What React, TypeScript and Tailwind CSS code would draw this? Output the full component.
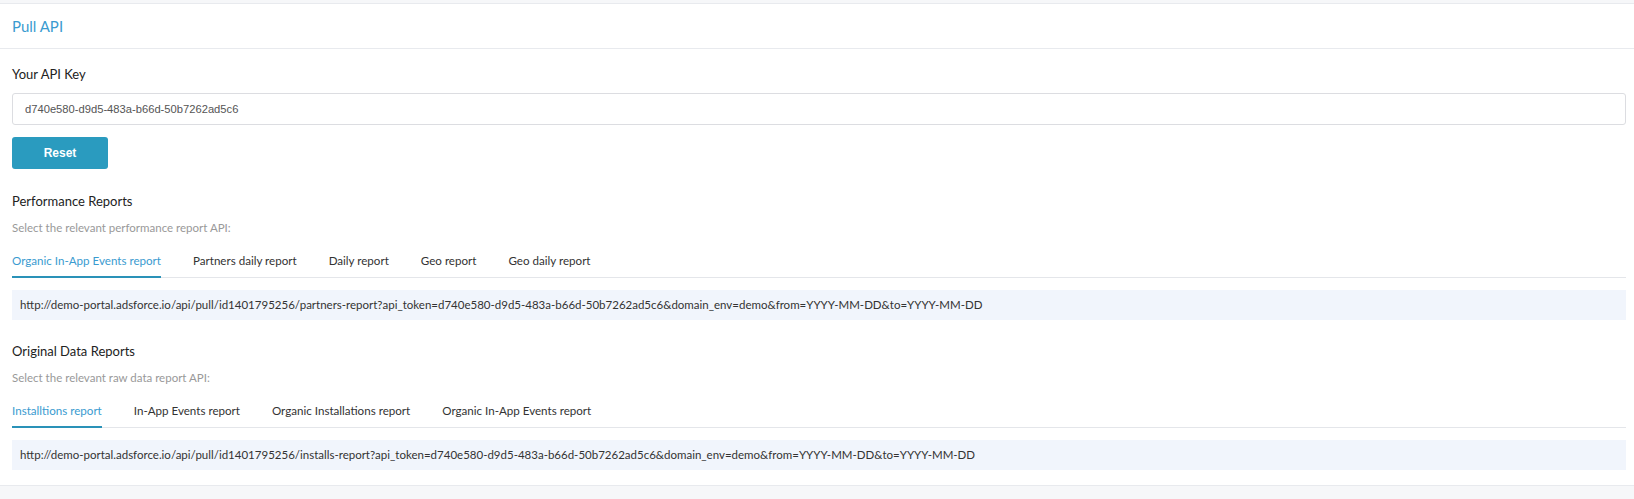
import { useState } from "react";

const API_KEY = "d740e580-d9d5-483a-b66d-50b7262ad5c6";
const BASE = "http://demo-portal.adsforce.io/api/pull/id1401795256";

const perfTabs = [
  { label: "Organic In-App Events report", path: "partners-report" },
  { label: "Partners daily report", path: "partners-report" },
  { label: "Daily report", path: "partners-report" },
  { label: "Geo report", path: "partners-report" },
  { label: "Geo daily report", path: "partners-report" },
];

const rawTabs = [
  { label: "Installtions report", path: "installs-report" },
  { label: "In-App Events report", path: "installs-report" },
  { label: "Organic Installations report", path: "installs-report" },
  { label: "Organic In-App Events report", path: "installs-report" },
];

const buildUrl = (path: string) =>
  `${BASE}/${path}?api_token=${API_KEY}&domain_env=demo&from=YYYY-MM-DD&to=YYYY-MM-DD`;

function ReportSection({
  title,
  hint,
  tabs,
  className,
}: {
  title: string;
  hint: string;
  tabs: { label: string; path: string }[];
  className?: string;
}) {
  const [active, setActive] = useState(0);

  return (
    <div className={className}>
      <h3 className="text-[13px] leading-[20px] text-[#222]">{title}</h3>
      <p className="mt-[7px] text-[11.5px] leading-[20px] text-[#999]">{hint}</p>

      {/* Tabs */}
      <div className="mt-[12px] flex border-b border-[#e4e6ea]">
        {tabs.map((t, i) => (
          <button
            key={t.label}
            onClick={() => setActive(i)}
            className={`mr-[32px] -mb-px pb-[5px] pt-[1px] text-[11.6px] leading-[20px] border-b-2 ${
              i === active
                ? "text-[#3a9bd0] border-[#2a92b8]"
                : "text-[#333] border-transparent"
            }`}
          >
            {t.label}
          </button>
        ))}
      </div>

      <div className="mt-[12px] h-[30px] flex items-center bg-[#f1f5fc] px-[8px] text-[11.5px] text-[#333] whitespace-nowrap overflow-hidden">
        {buildUrl(tabs[active].path)}
      </div>
    </div>
  );
}

export default function App() {
  const [apiKey] = useState(API_KEY);

  return (
    <div className="min-h-[499px] bg-[#f6f7f9] pt-[3px] font-['Lato','Noto_Sans',sans-serif]">
      <div className="bg-white border-y border-[#e8eaee]">
        {/* Header */}
        <div className="h-[45px] flex items-center px-[12px] border-b border-[#e8eaee]">
          <h2 className="text-[15px] text-[#3a9bd0]">Pull API</h2>
        </div>

        <div className="pl-[12px] pr-[8px] pt-[15px] pb-[15px]">
          <label className="block text-[13px] leading-[20px] text-[#222]">Your API Key</label>
          <input
            readOnly
            value={apiKey}
            className="mt-[9px] w-full h-[32px] rounded-[3px] border border-[#dcdde1] px-[12px] text-[11.2px] text-[#555] font-['Liberation_Sans',Arial,sans-serif] outline-none"
          />
          <button className="mt-[12px] w-[96px] h-[32px] rounded-[3px] bg-[#2a9bbf] text-white text-[12px] font-bold font-['Liberation_Sans',Arial,sans-serif]">
            Reset
          </button>

          <ReportSection
            className="mt-[22px]"
            title="Performance Reports"
            hint="Select the relevant performance report API:"
            tabs={perfTabs}
          />
          <ReportSection
            className="mt-[21px]"
            title="Original Data Reports"
            hint="Select the relevant raw data report API:"
            tabs={rawTabs}
          />
        </div>
      </div>
    </div>
  );
}
